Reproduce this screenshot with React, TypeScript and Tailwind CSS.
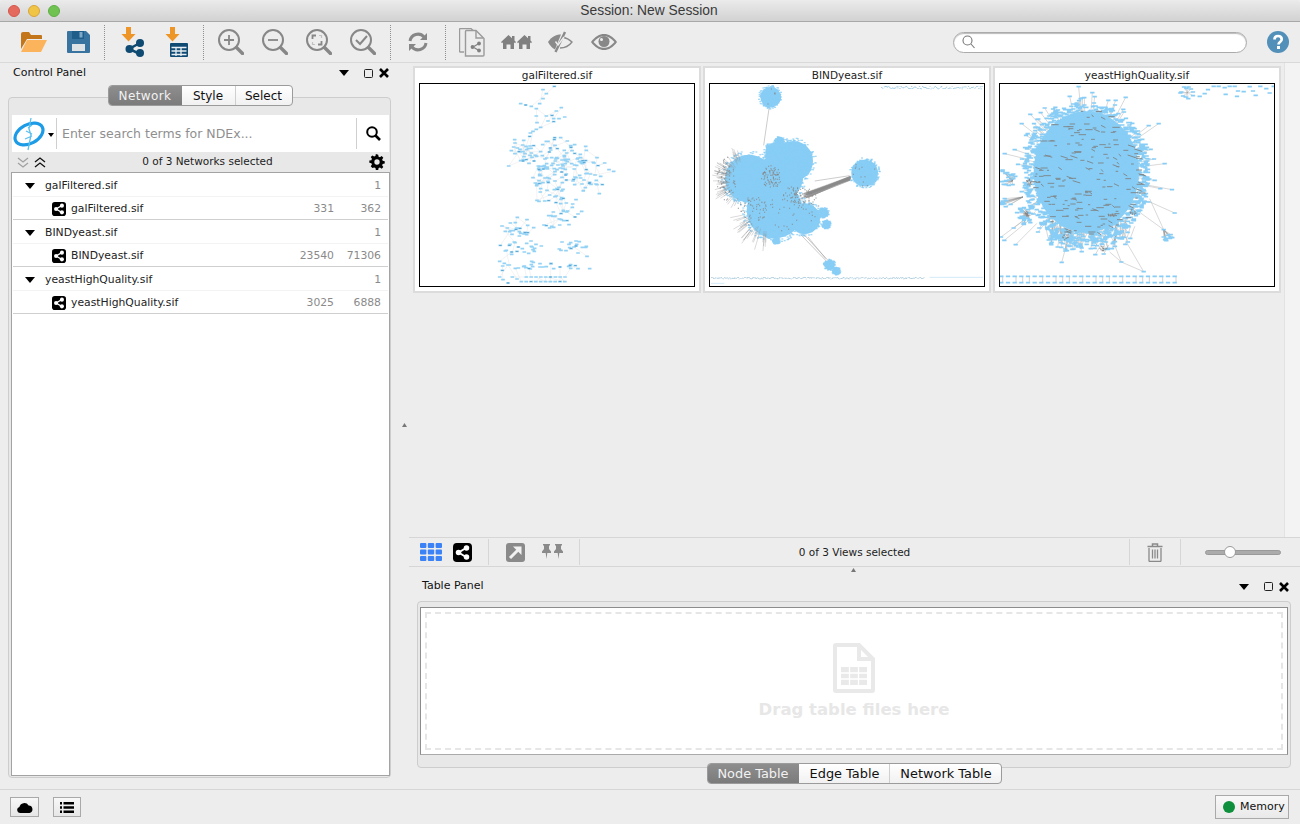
import React from 'react';

const rng = (seed: number) => () => {
  seed = (seed + 0x6d2b79f5) | 0;
  let t = Math.imul(seed ^ (seed >>> 15), 1 | seed);
  t = (t + Math.imul(t ^ (t >>> 7), 61 | t)) ^ t;
  return ((t ^ (t >>> 14)) >>> 0) / 4294967296;
};

type Pt = [number, number];

const disk = (r: () => number, cx: number, cy: number, rx: number, ry: number, n: number): Pt[] =>
  Array.from({ length: n }, () => {
    const a = r() * Math.PI * 2;
    const d = Math.sqrt(r());
    return [Math.round(cx + Math.cos(a) * d * rx), Math.round(cy + Math.sin(a) * d * ry)] as Pt;
  });

const boxes = (pts: Pt[], w: number, h: number) =>
  pts.map(([x, y]) => `M${x - w / 2} ${y - h / 2}h${w}v${h}h${-w}z`).join('');

const lines = (segs: [Pt, Pt][]) => segs.map(([a, b]) => `M${a[0]} ${a[1]}L${b[0]} ${b[1]}`).join('');

const radial = (r: () => number, cx: number, cy: number, from: number, to: number, min: number, max: number, n: number, start = 0.45) =>
  Array.from({ length: n }, () => {
    const a = ((from + r() * (to - from)) * Math.PI) / 180;
    const d = min + r() * (max - min);
    const s = d * start;
    return [
      [cx + Math.cos(a) * s, cy + Math.sin(a) * s],
      [cx + Math.cos(a) * d, cy + Math.sin(a) * d],
    ] as [Pt, Pt];
  });

function GalGraph() {
  const r = rng(11);
  const top: Pt[] = [[434, 68], [400, 78], [410, 90], [400, 105], [390, 120], [333, 120], [348, 124], [365, 128], [380, 135], [455, 132], [440, 142], [410, 157], [427, 155], [380, 157], [465, 160], [448, 165], [432, 165], [415, 172], [432, 174], [382, 177], [393, 191], [380, 197], [370, 203], [362, 208], [360, 218]];
  const row1: Pt[] = Array.from({ length: 9 }, (_, i) => [350 + i * 14.5, 640] as Pt);
  const row2: Pt[] = Array.from({ length: 10 }, (_, i) => [335 + i * 14.5, 654] as Pt);
  const left: Pt[] = [[270, 640], [308, 640], [322, 646], [280, 648], [295, 658], [612, 323], [598, 318], [585, 298], [562, 282], [553, 298], [578, 363], [562, 363], [569, 390], [297, 307], [305, 261], [315, 228], [272, 545], [290, 560], [306, 572], [530, 548], [532, 578], [270, 593], [278, 620], [540, 615], [505, 615]];
  const pts: Pt[] = [
    ...top, ...row1, ...row2, ...left,
    ...disk(r, 470, 335, 110, 60, 90),
    ...disk(r, 430, 270, 110, 50, 60),
    ...disk(r, 350, 260, 45, 35, 18),
    ...disk(r, 440, 400, 70, 22, 14),
    ...disk(r, 465, 440, 55, 35, 20),
    ...disk(r, 320, 490, 55, 30, 24),
    ...disk(r, 440, 475, 45, 20, 10),
    ...disk(r, 340, 550, 70, 20, 20),
    ...disk(r, 480, 550, 50, 25, 16),
    ...disk(r, 400, 605, 130, 14, 28),
  ];
  const segs: [Pt, Pt][] = [];
  pts.slice(0, 300).forEach((p) => {
    let best = pts[0];
    let bd = 1e9;
    for (let k = 0; k < 24; k++) {
      const q = pts[Math.floor(r() * pts.length)];
      const d = (q[0] - p[0]) ** 2 + (q[1] - p[1]) ** 2;
      if (q !== p && d < bd) { bd = d; best = q; }
    }
    if (bd < 3600) segs.push([p, best]);
  });
  return (
    <>
      <path d={lines(segs)} stroke="#e6e6e6" strokeWidth="1.5" fill="none" />
      <path d={boxes(pts, 11, 5)} fill="#93d2f5" />
      <path d={boxes(pts.filter((_, i) => i % 6 === 0), 7, 2.5)} fill="#4f9cc9" />
    </>
  );
}

function BindGraph() {
  const r = rng(5);
  const blobs: [number, number, number][] = [
    [213, 100, 31], [148, 345, 72], [280, 292, 60], [225, 265, 28], [240, 233, 13], [240, 340, 70], [225, 440, 84], [315, 465, 46], [495, 328, 40],
    [372, 447, 14], [380, 482, 12], [230, 532, 10], [210, 518, 7], [390, 604, 15], [410, 622, 11],
  ];
  const fuzz = blobs.flatMap(([x, y, b]) => disk(r, x, y, b * 1.16, b * 1.16, Math.round(b * 6)));
  const spikes = [
    ...radial(r, 140, 350, 115, 255, 72, 108, 64, 0.68),
    ...radial(r, 200, 440, 90, 175, 80, 125, 30, 0.65),
  ];
  const bundle: [Pt, Pt][] = Array.from({ length: 36 }, () => [
    [308 + r() * 22, 386 + r() * 18],
    [452, 338 + r() * 12],
  ]);
  const extra: [Pt, Pt][] = [
    [[208, 135], [192, 245]], [[345, 352], [450, 336]],
    [[305, 515], [380, 592]], [[315, 515], [385, 590]], [[325, 520], [378, 585]],
  ];
  const dots = [
    ...disk(r, 215, 340, 30, 35, 90),
    ...disk(r, 300, 400, 50, 30, 70),
    ...disk(r, 160, 440, 45, 45, 60),
    ...disk(r, 80, 340, 30, 70, 60),
    ...disk(r, 280, 440, 80, 70, 50),
    ...disk(r, 495, 328, 40, 40, 12),
    ...disk(r, 213, 100, 25, 25, 5),
  ];
  const topStrip = Array.from({ length: 95 }, (_, i) => [546 + i * 3.2 + r() * 2, 68 + r() * 8] as Pt);
  const botStrip = Array.from({ length: 200 }, (_, i) => [35 + i * 3.2 + r() * 2, 641 + r() * 5] as Pt);
  return (
    <>
      {blobs.map(([x, y, b], i) => <circle key={i} cx={x} cy={y} r={b} fill="#87cdf5" />)}
      <path d={boxes(fuzz, 6, 3)} fill="#87cdf5" />
      <path d={lines(spikes)} stroke="#8f8f8f" strokeWidth="1" fill="none" />
      <path d={lines(bundle)} stroke="#8a8a8a" strokeWidth="1.4" fill="none" />
      <path d={lines(extra)} stroke="#999" strokeWidth="1.5" fill="none" />
      <path d={boxes(dots, 3, 3)} fill="#868686" />
      <path d={boxes(topStrip, 4, 2)} fill="#8fc3dd" />
      <path d={boxes(botStrip, 4, 2)} fill="#a4c8da" />
      <path d="M850 641H690M34 659H74" stroke="#a5d5ee" strokeWidth="1.5" />
    </>
  );
}

function YeastGraph() {
  const r = rng(23);
  const core = disk(r, 290, 330, 190, 215, 2000);
  const ring: Pt[] = Array.from({ length: 60 }, () => {
    const a = r() * Math.PI * 2;
    const d = 1.02 + r() * 0.14;
    return [Math.round(290 + Math.cos(a) * 178 * d), Math.round(320 + Math.sin(a) * 205 * d)] as Pt;
  });
  const lower = disk(r, 300, 530, 125, 45, 110);
  const sideA = disk(r, 55, 340, 25, 30, 22);
  const sideB = disk(r, 105, 455, 28, 28, 28);
  const sideC = disk(r, 50, 420, 20, 15, 10);
  const tip = disk(r, 535, 520, 14, 12, 12);
  const out: Pt[] = [[267, 69], [273, 105], [240, 98], [408, 101], [378, 110], [96, 180], [122, 152], [507, 180], [477, 186], [45, 270], [75, 258], [525, 300], [512, 375], [547, 378], [555, 448], [522, 498], [395, 595], [462, 624], [216, 596], [78, 543], [34, 520], [44, 530], [72, 493], [145, 505]];
  const spokes: [Pt, Pt][] = [
    ...out.map((p) => [p, [p[0] + (290 - p[0]) * 0.3, p[1] + (330 - p[1]) * 0.3]] as [Pt, Pt]),
    ...ring.map((p) => [p, [p[0] + (290 - p[0]) * 0.2, p[1] + (330 - p[1]) * 0.2]] as [Pt, Pt]),
    ...lower.map((p) => [p, [p[0] + (r() - 0.5) * 40, p[1] - 20 - r() * 40]] as [Pt, Pt]),
    ...sideA.map((p) => [p, [68, 352]] as [Pt, Pt]),
    ...sideB.map((p) => [p, [112, 450]] as [Pt, Pt]),
    ...sideC.map((p) => [p, [100, 400]] as [Pt, Pt]),
    ...tip.map((p) => [p, [522, 498]] as [Pt, Pt]),
    [[395, 595], [462, 624]], [[360, 565], [395, 595]], [[480, 405], [522, 498]],
  ];
  const dashes = disk(r, 290, 330, 170, 190, 190).map(([x, y]) => [[x, y], [x + 5 + r() * 18, y + (r() < 0.2 ? 7 : 0)]] as [Pt, Pt]);
  const blots = [...disk(r, 120, 355, 10, 10, 14), ...disk(r, 112, 450, 10, 8, 14), ...disk(r, 365, 455, 18, 5, 16), ...disk(r, 430, 445, 10, 8, 12), ...disk(r, 225, 520, 12, 12, 12), ...disk(r, 340, 555, 12, 8, 12)];
  const hub: Pt[] = [[583, 70], [597, 70], [575, 85], [610, 85], [580, 97], [596, 105], [610, 96], [590, 74], [604, 76], [572, 88], [588, 100]];
  const chain: Pt[] = [[630, 98], [645, 90], [655, 78], [672, 68], [687, 68], [705, 72], [720, 68], [735, 68], [708, 92], [745, 82], [762, 84], [742, 98], [780, 69], [790, 82], [798, 95], [812, 68], [830, 75], [840, 88], [852, 68]];
  const bTop = Array.from({ length: 27 }, (_, i) => [35 + i * 20, 638] as Pt);
  const bBot = Array.from({ length: 27 }, (_, i) => [35 + i * 20, 657] as Pt);
  const bLinks: [Pt, Pt][] = bTop.map((p) => [[p[0] + 4, 640], [p[0] + 4, 655]] as [Pt, Pt]).filter((_, i) => i % 2 === 0 || i % 3 === 0);
  return (
    <>
      <path d={lines(spokes)} stroke="#8c8c8c" strokeWidth="1" fill="none" />
      <ellipse cx="290" cy="325" rx="158" ry="182" fill="#87cdf5" />
      <path d={boxes([...core, ...ring, ...lower, ...sideA, ...sideB, ...sideC, ...tip, ...out], 13, 5)} fill="#87cdf5" />
      <path d={lines(dashes)} stroke="#7f8589" strokeWidth="2.8" fill="none" />
      <path d={boxes(blots, 4, 3)} fill="#878787" />
      <path d={lines(hub.map((p) => [p, [593, 87]] as [Pt, Pt]))} stroke="#999" strokeWidth="1" />
      <path d={boxes([...hub, ...chain], 13, 5)} fill="#87cdf5" />
      <path d={lines(bLinks)} stroke="#8c8c8c" strokeWidth="1.2" />
      <path d={boxes([...bTop, ...bBot], 13, 5)} fill="#87cdf5" />
    </>
  );
}

function Thumb({ title, children }: { title: string; children: React.ReactNode }) {
  return (
    <div className="w-[288px] h-[227px] border-2 border-[#dcdcdc] bg-white flex flex-col items-center shrink-0">
      <div className="h-[15px] leading-[15px] text-[10.5px] text-[#222] text-center">{title}</div>
      <div className="w-[276px] h-[204px] border border-black">
        <svg viewBox="31 61 822 606" width="274" height="202" className="block">{children}</svg>
      </div>
    </div>
  );
}

function ShareBadge({ size = 14 }: { size?: number }) {
  return (
    <svg width={size} height={size} viewBox="0 0 20 20" className="shrink-0">
      <rect width="20" height="20" rx="4" fill="#000" />
      <path d="M14 5 6 10l8 5" stroke="#fff" strokeWidth="2" fill="none" />
      <circle cx="14.2" cy="5.2" r="2.9" fill="#fff" />
      <circle cx="5.8" cy="10" r="2.9" fill="#fff" />
      <circle cx="14.2" cy="14.8" r="2.9" fill="#fff" />
    </svg>
  );
}

function Sep() {
  return <div className="h-[35px] border-l border-dotted border-[#8f8f8f] w-px" />;
}

function Slot({ children }: { children: React.ReactNode }) {
  return <div className="w-11 h-10 flex items-center justify-center shrink-0">{children}</div>;
}

function Lens({ children }: { children?: React.ReactNode }) {
  return (
    <svg width="26" height="26" viewBox="0 0 26 26" fill="none" stroke="#878787">
      <circle cx="11" cy="11" r="10" strokeWidth="2" />
      <path d="M18.5 18.5 24.5 24.5" strokeWidth="3.4" strokeLinecap="round" />
      {children}
    </svg>
  );
}

function ArrowDown() {
  return <path d="M5 0h5v7h4.5L7.5 14.5.5 7H5z" fill="#ed9526" />;
}

function Toolbar() {
  return (
    <div className="h-[41px] flex items-center pl-[12px] pr-[11px] bg-[#ededed] border-b border-[#d9d9d9] shrink-0">
      <Slot>
        <svg width="26" height="20" viewBox="0 0 26 20">
          <path d="M0 2a2 2 0 0 1 2-2h6l2 3h10a1 1 0 0 1 1 1v3H6L0 17z" fill="#c4761b" />
          <path d="M6 8h20l-6 12H0z" fill="#fbb45c" />
        </svg>
      </Slot>
      <Slot>
        <svg width="23" height="22" viewBox="0 0 23 22">
          <path d="M1 0h18l4 4v17a1 1 0 0 1-1 1H1a1 1 0 0 1-1-1V1a1 1 0 0 1 1-1z" fill="#39739f" />
          <rect x="5" y="0" width="12" height="8" fill="#1f5d8a" />
          <rect x="12.5" y="1" width="3" height="5.5" fill="#7ea8c6" />
          <rect x="5" y="13" width="13" height="7" fill="#dfe3e6" />
        </svg>
      </Slot>
      <div className="ml-[4px] mr-[6px]"><Sep /></div>
      <Slot>
        <svg width="24" height="30" viewBox="0 0 24 30">
          <ArrowDown />
          <path d="M19 16 8 22l11 5" stroke="#0f4a73" strokeWidth="2.5" fill="none" />
          <circle cx="19" cy="16" r="4" fill="#0f4a73" />
          <circle cx="8.5" cy="22" r="4" fill="#0f4a73" />
          <circle cx="19" cy="26" r="4" fill="#0f4a73" />
        </svg>
      </Slot>
      <Slot>
        <svg width="24" height="30" viewBox="0 0 24 30">
          <ArrowDown />
          <rect x="5" y="16" width="18" height="14" rx="1" fill="#0f4a73" />
          <path d="M6.5 20.5h15M6.5 24h15M6.5 27.5h15M11 20v9M16 20v9" stroke="#e9eef2" strokeWidth="1.3" />
        </svg>
      </Slot>
      <div className="ml-[4px] mr-[5px]"><Sep /></div>
      <Slot><Lens><path d="M6 11h10M11 6v10" strokeWidth="1.8" /></Lens></Slot>
      <Slot><Lens><path d="M6 11h10" strokeWidth="1.8" /></Lens></Slot>
      <Slot><Lens><path d="M6.5 10V6.5h3.5M15.5 12v3.500H12" strokeWidth="1.8" /><path d="M6.5 13v2.500H9M15.5 9V6.500H13" strokeWidth="1.2" stroke="#c2c2c2" /></Lens></Slot>
      <Slot><Lens><path d="m6 11 4 4 7-8" strokeWidth="2" /></Lens></Slot>
      <div className="ml-[5px] mr-[5px]"><Sep /></div>
      <Slot>
        <svg width="20" height="20" viewBox="0 0 20 20" fill="none" stroke="#878787" strokeWidth="3">
          <path d="M2 9a8 8 0 0 1 14-4" />
          <path d="M18 11a8 8 0 0 1-14 4" />
          <path d="M19 1v7h-7z" fill="#878787" stroke="none" />
          <path d="M1 19v-7h7z" fill="#878787" stroke="none" />
        </svg>
      </Slot>
      <div className="ml-[5px] mr-[4px]"><Sep /></div>
      <Slot>
        <svg width="26" height="29" viewBox="0 0 26 29" fill="none" stroke="#9a9a9a" strokeWidth="1.4">
          <path d="M5 24H1.500a1 1 0 0 1-1-1V1.500a1 1 0 0 1 1-1H12l3 3" />
          <path d="M6.500 28V3.500a1 1 0 0 1 1-1H17l8 8V27a1 1 0 0 1-1 1z" fill="#ededed" />
          <path d="M17 3v7h7" />
          <path d="M20 15.500 14 19l6 3.500" stroke="#808080" strokeWidth="1.2" />
          <circle cx="20" cy="15.500" r="1.900" fill="#808080" stroke="none" />
          <circle cx="13.500" cy="19" r="1.900" fill="#808080" stroke="none" />
          <circle cx="20" cy="22.500" r="1.900" fill="#808080" stroke="none" />
        </svg>
      </Slot>
      <Slot>
        <svg width="31" height="14" viewBox="0 0 31 14" fill="#808080">
          <path d="M0 7 7.500 0 11 3.200V1h2.500v4.500L15 7l-1 1.200-1-.9V14H9.500V9.500h-4V14H2V7.300l-1 .9zM16 7l7.500-7L27 3.200V1h2.500v4.500L31 7l-1 1.200-1-.9V14h-3.500V9.500h-4V14H18V7.300l-1 .9z" />
        </svg>
      </Slot>
      <Slot>
        <svg width="26" height="22" viewBox="0 0 26 22">
          <path d="M1 11C5 5 10 3.500 14 3.500L8 18.500C5 17 3 14.500 1 11z" fill="#8a8a8a" />
          <path d="M15 6c4 .8 7.500 2.500 10 5-3 4-7 6-12 6" fill="none" stroke="#8a8a8a" strokeWidth="1.300" />
          <path d="M18 1 8.500 21" stroke="#8a8a8a" strokeWidth="2.400" />
          <path d="M8.500 10.500 11 14l6-8" stroke="#ededed" strokeWidth="1.500" fill="none" />
        </svg>
      </Slot>
      <Slot>
        <svg width="26" height="16" viewBox="0 0 26 16">
          <path d="M0 8C4 2.500 8.500 0 13 0s9 2.500 13 8c-4 5.500-8.500 8-13 8S4 13.500 0 8z" fill="#878787" />
          <path d="M2.500 8C6 4 9 2.200 13 2.200S20 4 23.500 8C20 12 17 13.800 13 13.800S6 12 2.500 8z" fill="#ededed" />
          <circle cx="13" cy="7.500" r="5.500" fill="#878787" />
          <circle cx="10.500" cy="5.500" r="1.500" fill="#ededed" />
        </svg>
      </Slot>
      <div className="flex-1" />
      <div className="w-[294px] h-[21px] rounded-full bg-white border border-[#ababab] flex items-center pl-[8px] mr-[20px] shadow-[inset_0_1px_1px_#bbb]">
        <svg width="13" height="14" viewBox="0 0 13 14" fill="none" stroke="#777" strokeWidth="1.100">
          <circle cx="5.500" cy="5.500" r="4.500" />
          <path d="m9 9 3.500 4" />
        </svg>
      </div>
      <svg width="22" height="22" viewBox="0 0 22 22" className="shrink-0">
        <circle cx="11" cy="11" r="11" fill="#5290b9" />
        <path d="M7.500 8.500C7.500 6 9 5 11 5s3.700 1.100 3.700 3.200c0 2.900-3.200 2.800-3.200 5.300" fill="none" stroke="#fff" strokeWidth="2.700" />
        <rect x="10" y="15" width="3" height="3" fill="#fff" />
      </svg>
    </div>
  );
}

function WindowButtons() {
  return (
    <div className="flex items-center">
      <svg width="10" height="6" viewBox="0 0 10 6"><path d="M0 0h10L5 6z" fill="#000" /></svg>
      <div className="w-[9px] h-[9px] border border-[#222] rounded-[1.500px] ml-[15px]" />
      <svg width="10" height="10" viewBox="0 0 10 10" className="ml-[6px]"><path d="M1 1 9 9M9 1 1 9" stroke="#000" strokeWidth="2.600" /></svg>
    </div>
  );
}

function Segmented({ items, size }: { items: { label: string; w: string; extra?: string }[]; size: string }) {
  return (
    <div className={`flex h-[21px] rounded-[4px] border border-[#9b9b9b] bg-gradient-to-b from-white to-[#f1f1f1] overflow-hidden leading-[20px] relative z-10 ${size}`}>
      {items.map((t, i) => (
        <div
          key={t.label}
          className={`${t.w} text-center ${t.extra ?? ''} ${i === 0 ? 'bg-gradient-to-b from-[#8e8e8e] to-[#7b7b7b] text-[#f2f2f2]' : 'text-[#111]'} ${i === 2 ? 'border-l border-[#cfcfcf]' : ''}`}
        >
          {t.label}
        </div>
      ))}
    </div>
  );
}

function NetGroup({ name, a, b }: { name: string; a: number; b: number }) {
  return (
    <div className="border-b border-[#cfcfcf] text-[10.8px] text-[#222]">
      <div className="h-[24px] flex items-center border-b border-[#f3f3f3] pl-[12px] pr-[7px] pt-[2px]">
        <svg width="10" height="6" viewBox="0 0 10 6"><path d="M0 0h10L5 6z" fill="#000" /></svg>
        <span className="ml-[10px] pt-[2px]">{name}</span>
        <span className="ml-auto pt-[2px] text-[#8a8a8a]">1</span>
      </div>
      <div className="h-[22px] flex items-center pl-[39px] pr-[7px] pt-[1px]">
        <ShareBadge />
        <span className="ml-[5px] pt-[2px]">{name}</span>
        <span className="ml-auto pt-[2px] text-[#8a8a8a]">{a}</span>
        <span className="w-[47px] pt-[2px] text-right text-[#8a8a8a]">{b}</span>
      </div>
    </div>
  );
}

function ControlPanel() {
  return (
    <div className="w-[400px] shrink-0 flex flex-col">
      <div className="h-[20px] flex items-center justify-between pl-[13px] pr-[11px] text-[11px] text-[#111]">
        <span>Control Panel</span>
        <WindowButtons />
      </div>
      <div className="flex justify-center -mb-[9px] relative z-10 mt-[2px]">
        <Segmented
          size="text-[12px]"
          items={[{ label: 'Network', w: 'w-[73px]', extra: 'tracking-[0.4px]' }, { label: 'Style', w: 'w-[53px]' }, { label: 'Select', w: 'w-[57px]' }]}
        />
      </div>
      <div className="flex-1 ml-[8px] mr-[9px] mb-[11px] rounded-[4px] border border-[#cdcdcd] bg-[#e8e8e8] flex flex-col pt-[17px] pl-[3px] pr-[1px] pb-[1px]">
        <div className="h-[37px] bg-white flex items-center shrink-0">
          <svg width="34" height="34" viewBox="0 0 34 34" className="shrink-0 ml-[1px]">
            <ellipse cx="16" cy="17" rx="15" ry="9.500" transform="rotate(-28 16 17)" fill="none" stroke="#1c9be6" strokeWidth="3.200" />
            <path d="M18 1 16 12l2 6-3 15M13 14l6 3M12 22l7-3M19 8l-4 3" fill="none" stroke="#5cc0ee" strokeWidth="1.300" />
          </svg>
          <svg width="6" height="4" viewBox="0 0 6 4" className="ml-px mt-[3px]"><path d="M0 0h6L3 4z" fill="#000" /></svg>
          <div className="h-[31px] border-l border-[#cfcfcf] ml-[2px]" />
          <span className="ml-[5px] pt-[2px] text-[12.500px] text-[#8f8f8f] flex-1">Enter search terms for NDEx...</span>
          <div className="h-[31px] w-[33px] border-l border-[#cfcfcf] flex items-center justify-center">
            <svg width="15" height="15" viewBox="0 0 15 15" fill="none" stroke="#000">
              <circle cx="6" cy="6" r="4.800" strokeWidth="2" />
              <path d="m9.500 9.500 4.500 4.500" strokeWidth="2.600" />
            </svg>
          </div>
        </div>
        <div className="h-[20px] flex items-center relative text-[10.500px] text-[#222] shrink-0">
          <svg width="12" height="11" viewBox="0 0 12 11" fill="none" stroke="#a0a0a0" strokeWidth="1.300" className="ml-[5px]"><path d="m1 1 5 4 5-4M1 6l5 4 5-4" /></svg>
          <svg width="12" height="11" viewBox="0 0 12 11" fill="none" stroke="#111" strokeWidth="1.300" className="ml-[5px]"><path d="m1 5 5-4 5 4M1 10l5-4 5 4" /></svg>
          <span className="flex-1 text-center">0 of 3 Networks selected</span>
          <svg width="16" height="16" viewBox="0 0 24 24" className="mr-[4px]">
            <path fill="#000" d="M13.800 1l.6 3.100 2 .8 2.600-1.800 2.500 2.500-1.800 2.600.8 2 3.100.6v3.500l-3.100.6-.8 2 1.800 2.600-2.500 2.500-2.600-1.800-2 .8-.6 3.100h-3.500l-.6-3.100-2-.8L5.100 21 2.600 18.500l1.800-2.600-.8-2-3.100-.6V9.800l3.100-.6.8-2L2.600 4.600 5.100 2.100l2.600 1.800 2-.8.6-3.100zM12 8a4 4 0 1 0 0 8 4 4 0 0 0 0-8z" />
          </svg>
        </div>
        <div className="flex-1 bg-white border border-[#a3a3a3] -mx-[1px] px-px">
          <NetGroup name="galFiltered.sif" a={331} b={362} />
          <NetGroup name="BINDyeast.sif" a={23540} b={71306} />
          <NetGroup name="yeastHighQuality.sif" a={3025} b={6888} />
        </div>
      </div>
    </div>
  );
}

function NetworkBar() {
  return (
    <div className="h-[30px] border-y border-[#d6d6d6] flex items-center text-[10.500px] text-[#222] shrink-0">
      <svg width="22" height="18" viewBox="0 0 22 18" fill="#3a82f6" className="ml-[11px]">
        <rect width="6.400" height="5" rx="1" /><rect x="7.800" width="6.400" height="5" rx="1" /><rect x="15.600" width="6.400" height="5" rx="1" />
        <rect y="6.500" width="6.400" height="5" rx="1" /><rect x="7.800" y="6.500" width="6.400" height="5" rx="1" /><rect x="15.600" y="6.500" width="6.400" height="5" rx="1" />
        <rect y="13" width="6.400" height="5" rx="1" /><rect x="7.800" y="13" width="6.400" height="5" rx="1" /><rect x="15.600" y="13" width="6.400" height="5" rx="1" />
      </svg>
      <div className="ml-[11px]"><ShareBadge size={19} /></div>
      <div className="h-[26px] border-l border-[#d6d6d6] ml-[16px]" />
      <svg width="19" height="19" viewBox="0 0 19 19" className="ml-[17px]">
        <rect width="19" height="19" rx="3" fill="#8a8a8a" />
        <path d="M4 15 13 6" stroke="#f1f1f1" strokeWidth="3" fill="none" />
        <path d="M7 3.500h8.500V12z" fill="#f1f1f1" />
      </svg>
      <svg width="23" height="15" viewBox="0 0 23 15" fill="#8a8a8a" className="ml-[16px] -mt-[1px]">
        <path d="M2 0h7v1.500H8V5l2 2.500V9H6.300L5.500 15l-.8-6H1V7.500L3 5V1.500H2zM14 0h7v1.500h-1V5l2 2.500V9h-3.700l-.8 6-.8-6H13V7.500L15 5V1.500h-1z" />
      </svg>
      <div className="h-[26px] border-l border-[#d6d6d6] ml-[15px]" />
      <span className="flex-1 text-center pt-[2px]">0 of 3 Views selected</span>
      <div className="h-[26px] border-l border-[#d6d6d6]" />
      <svg width="16" height="19" viewBox="0 0 16 19" fill="none" stroke="#8a8a8a" className="ml-[17px]">
        <path d="M.5 3.500h15M5.500 3V1h5v2" strokeWidth="1.500" />
        <path d="M2 5v12.500a1 1 0 0 0 1 1h10a1 1 0 0 0 1-1V5" strokeWidth="1.300" />
        <path d="M5.500 6.500v9M8 6.500v9M10.500 6.500v9" strokeWidth="1.300" />
      </svg>
      <div className="h-[26px] border-l border-[#d6d6d6] ml-[17px]" />
      <div className="ml-[24px] w-[76px] h-[5px] rounded-full bg-[#ababab] border border-[#999] relative mr-[19px]">
        <div className="absolute left-[18px] -top-[5px] w-[12px] h-[12px] rounded-full bg-white border border-[#9a9a9a]" />
      </div>
    </div>
  );
}

function TablePanel() {
  return (
    <div className="flex-1 flex flex-col pl-[8px] pr-[9px] relative">
      <div className="h-[17px] mt-[11px] flex items-center justify-between pl-[5px] pr-[2px] text-[11px] text-[#111] shrink-0">
        <span>Table Panel</span>
        <WindowButtons />
      </div>
      <div className="mt-[6px] h-[167px] rounded-[4px] border border-[#cdcdcd] bg-[#e8e8e8] px-[2px] pt-[5px] shrink-0">
        <div className="h-[148px] bg-white border border-[#8c8c8c] border-b-[#aaa] p-[4px]">
          <div className="h-full border-[2px] border-dashed border-[#e6e6e6] flex flex-col items-center pt-[29px]">
            <svg width="42" height="50" viewBox="0 0 42 50">
              <path d="M3 2h23l14 14v31a1 1 0 0 1-1 1H3a1 1 0 0 1-1-1V3a1 1 0 0 1 1-1z" fill="none" stroke="#e9e9e9" strokeWidth="4" />
              <path d="M26 2v14h14" fill="none" stroke="#e9e9e9" strokeWidth="4" />
              <path d="M8 24h26v18H8z" fill="#e9e9e9" />
              <path d="M8 30h26M8 36h26M16.500 24v18M25.500 24v18" stroke="#fff" strokeWidth="1.300" />
            </svg>
            <div className="text-[16.500px] font-bold text-[#e7e7e7] mt-[5px] leading-[24px]">Drag table files here</div>
          </div>
        </div>
      </div>
      <div className="flex justify-center -mt-[5px] relative z-10">
        <Segmented
          size="text-[12.900px]"
          items={[{ label: 'Node Table', w: 'w-[91px]' }, { label: 'Edge Table', w: 'w-[90px]', extra: 'pl-[2px]' }, { label: 'Network Table', w: 'w-[112px]', extra: 'pl-[2px]' }]}
        />
      </div>
    </div>
  );
}

export default function App() {
  return (
    <div className="w-[1300px] h-[824px] flex flex-col bg-[#ededed] overflow-hidden [font-family:'DejaVu_Sans',sans-serif]">
      <div className="h-[22px] shrink-0 relative flex items-center justify-center bg-gradient-to-b from-[#ebebeb] to-[#d2d2d2] border-b border-[#a8a8a8] rounded-t-[4px]">
        <div className="absolute left-[8px] top-[5px] flex gap-[8px]">
          <div className="w-[12px] h-[12px] rounded-full bg-[#e56a5e] border border-[#d5574c]" />
          <div className="w-[12px] h-[12px] rounded-full bg-[#f0c444] border border-[#d9a53c]" />
          <div className="w-[12px] h-[12px] rounded-full bg-[#70c350] border border-[#5fae45]" />
        </div>
        <span className="text-[13.800px] pt-[2px] pr-[2px] text-[#3a3a3a] [font-family:'Liberation_Sans',sans-serif]">Session: New Session</span>
      </div>
      <Toolbar />
      <div className="flex-1 flex min-h-0">
        <ControlPanel />
        <div className="w-[9px] shrink-0 flex flex-col items-center pt-[360px]">
          <svg width="5" height="4" viewBox="0 0 5 4"><path d="M0 4 2.500 0 5 4z" fill="#777" /></svg>
        </div>
        <div className="flex-1 flex flex-col min-w-0 relative">
          <div className="h-[474px] flex shrink-0">
            <div className="flex-1 flex gap-[2px] pl-[4px] pt-[3px] items-start">
              <Thumb title="galFiltered.sif"><GalGraph /></Thumb>
              <Thumb title="BINDyeast.sif"><BindGraph /></Thumb>
              <Thumb title="yeastHighQuality.sif"><YeastGraph /></Thumb>
            </div>
            <div className="w-[16px] bg-[#f3f3f3] border-l border-[#e2e2e2] shrink-0" />
          </div>
          <NetworkBar />
          <div className="absolute left-[442px] top-[505px]">
            <svg width="5" height="4" viewBox="0 0 5 4"><path d="M0 4 2.500 0 5 4z" fill="#777" /></svg>
          </div>
          <TablePanel />
        </div>
      </div>
      <div className="h-[35px] shrink-0 border-t border-[#d6d6d6] flex items-center pl-[10px] pr-[11px]">
        <div className="w-[29px] h-[20px] border border-[#a9a9a9] bg-gradient-to-b from-[#f8f8f8] to-[#e6e6e6] flex items-center justify-center">
          <svg width="16" height="11" viewBox="0 0 16 11"><path d="M3 11a3 3 0 0 1-.6-5.900A5 5 0 0 1 11.600 3.500 3.800 3.800 0 0 1 12.500 11z" fill="#000" /></svg>
        </div>
        <div className="w-[28px] h-[20px] ml-[14px] border border-[#a9a9a9] bg-gradient-to-b from-[#f8f8f8] to-[#e6e6e6] flex items-center justify-center">
          <svg width="14" height="11" viewBox="0 0 14 11" fill="#000"><path d="M0 0h2v2.500H0zM0 4.250h2v2.500H0zM0 8.500h2V11H0zM3.500 0H14v2.500H3.500zM3.500 4.250H14v2.500H3.500zM3.500 8.500H14V11H3.500z" /></svg>
        </div>
        <div className="ml-auto w-[74px] h-[24px] border border-[#a9a9a9] bg-gradient-to-b from-[#f8f8f8] to-[#e9e9e9] flex items-center pl-[7px] text-[11px] text-[#111]">
          <div className="w-[12px] h-[12px] rounded-full bg-[#0d8f3c]" />
          <span className="ml-[5px]">Memory</span>
        </div>
      </div>
    </div>
  );
}
